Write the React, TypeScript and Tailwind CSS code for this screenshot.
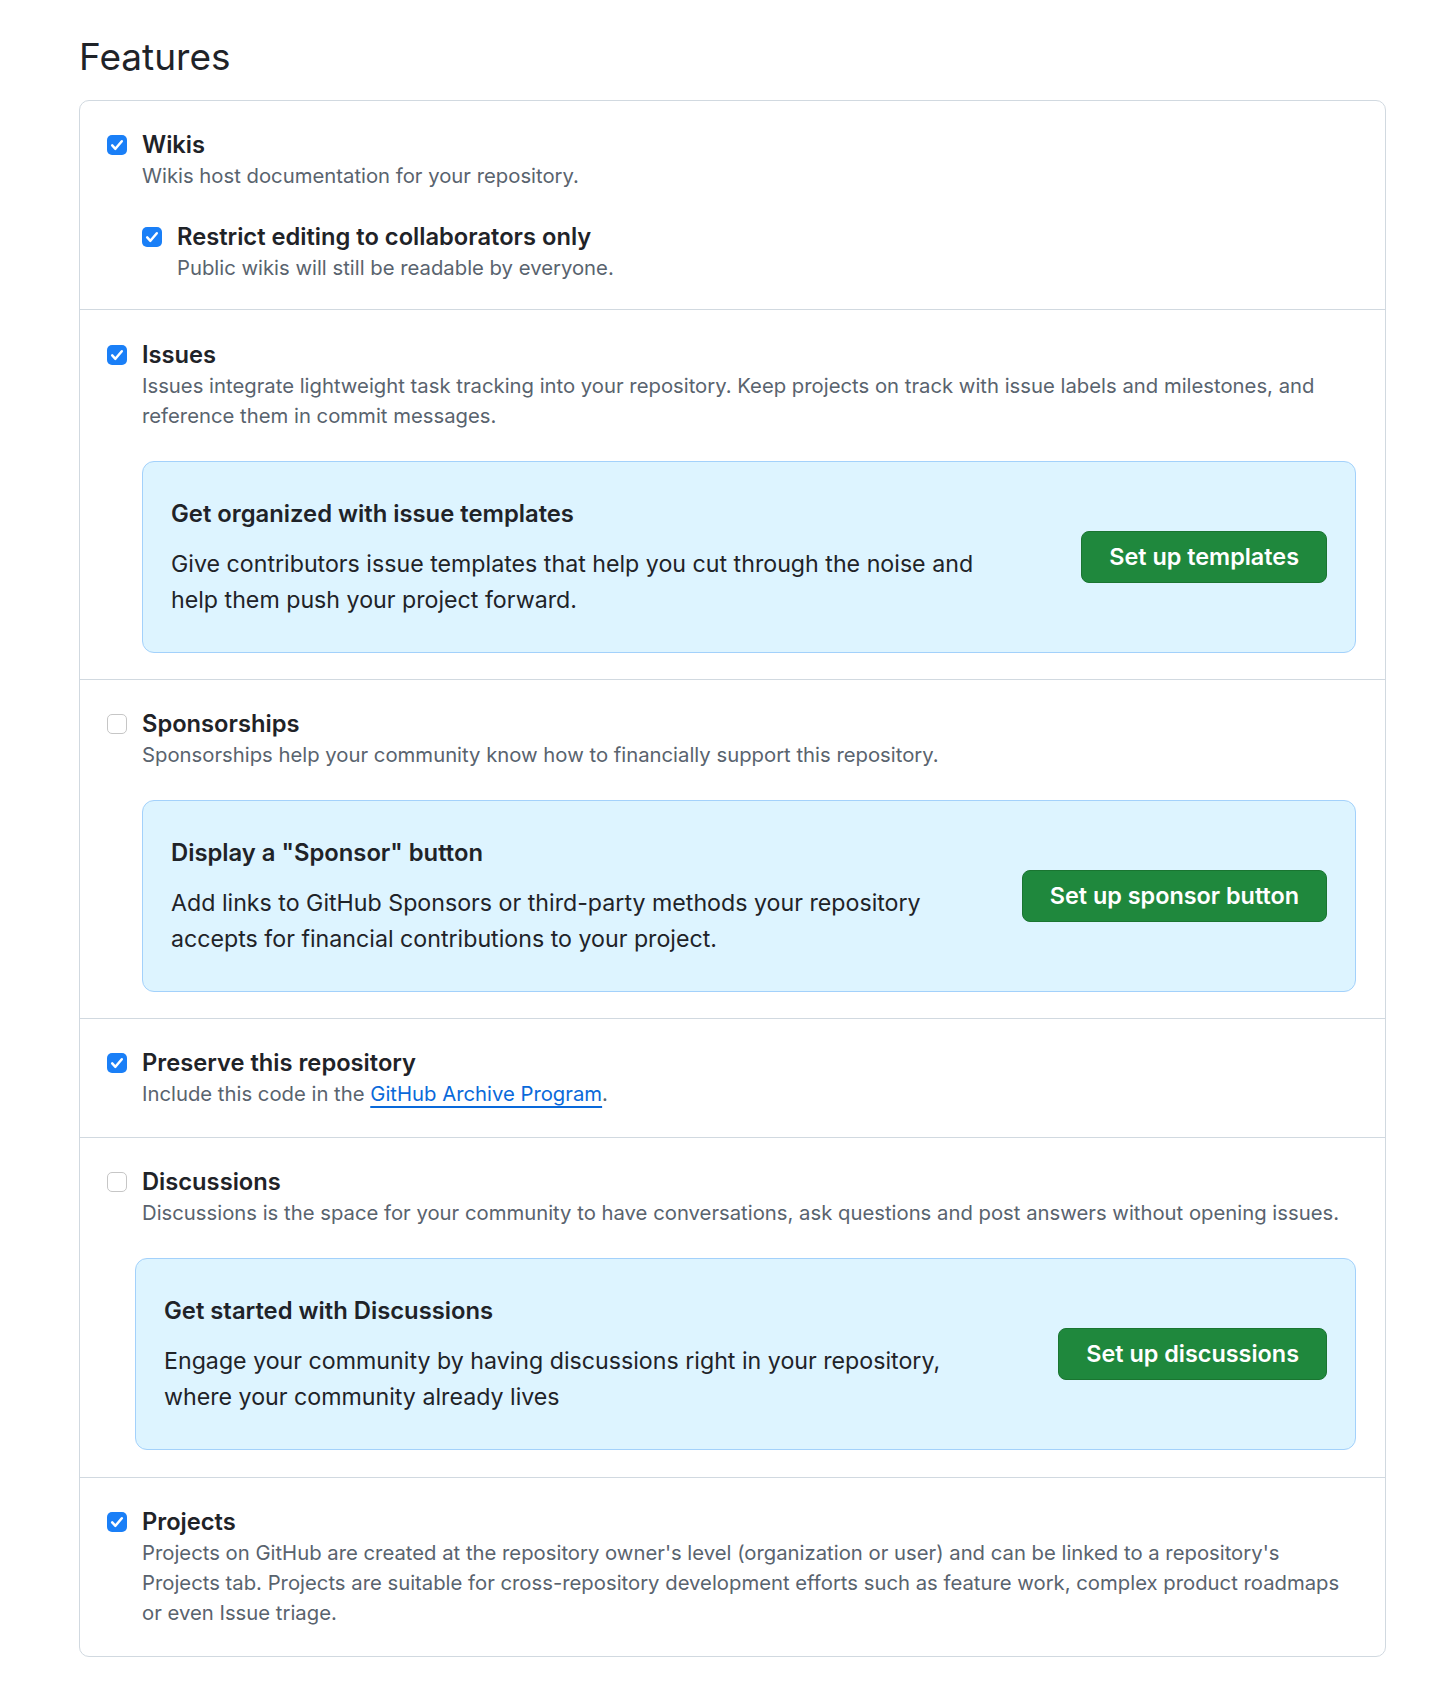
import React from 'react';

function Checkbox({ checked }: { checked: boolean }) {
  if (!checked) {
    return <span className="mt-[6px] h-[20px] w-[20px] shrink-0 rounded-[5px] border border-[#c6c6c6] bg-white" />;
  }
  return (
    <span className="mt-[6px] flex h-[20px] w-[20px] shrink-0 items-center justify-center rounded-[5px] bg-[#1a7ff7]">
      <svg viewBox="0 0 20 20" className="h-[20px] w-[20px]" fill="none">
        <path d="M5.2 10.4l3.2 3.4 6.4-7.6" stroke="white" strokeWidth="2.5" strokeLinecap="round" strokeLinejoin="round" />
      </svg>
    </span>
  );
}

function Feature({
  checked,
  title,
  children,
  extra,
}: {
  checked: boolean;
  title: string;
  children: React.ReactNode;
  extra?: React.ReactNode;
}) {
  return (
    <div className="flex gap-[15px]">
      <Checkbox checked={checked} />
      <div className="min-w-0 flex-1">
        <div className="text-[23.7px] font-semibold leading-[32px] text-[#1f2328]">{title}</div>
        <p className="text-[20.3px] leading-[30px] text-[#59636e]">{children}</p>
        {extra}
      </div>
    </div>
  );
}

function Banner({
  title,
  body,
  button,
  className = '',
}: {
  title: string;
  body: string;
  button: string;
  className?: string;
}) {
  return (
    <div
      className={
        'mt-[30px] flex items-center justify-between gap-6 rounded-[12px] border border-[#a3d1fb] bg-[#ddf4ff] px-[28px] py-[34px] ' +
        className
      }
    >
      <div className="max-w-[820px]">
        <div className="text-[23.8px] font-semibold leading-[36px] text-[#1f2328]">{title}</div>
        <p className="mt-[14px] text-[23.2px] leading-[36px] text-[#1f2328]">{body}</p>
      </div>
      <button className="h-[52px] shrink-0 rounded-[8px] border border-[#1a7531] bg-[#1f883d] px-[27px] text-[23.4px] font-semibold text-white">
        {button}
      </button>
    </div>
  );
}

export default function App() {
  return (
    <div className="min-h-screen bg-white px-[79px] pt-[33px] pb-[40px] font-['Inter',sans-serif]">
      <h2 className="mb-[19px] text-[37px] font-normal leading-[48px] text-[#1f2328]">Features</h2>

      <div className="w-[1307px] rounded-[10px] border border-[#d1d9e0] bg-white">
        <section className="pl-[27px] pr-[29px] pt-[28px] pb-[26px]">
          <Feature checked title="Wikis">
            Wikis host documentation for your repository.
          </Feature>
          <div className="mt-[30px] pl-[35px]">
            <Feature checked title="Restrict editing to collaborators only">
              Public wikis will still be readable by everyone.
            </Feature>
          </div>
        </section>

        <section className="border-t border-[#d1d9e0] pl-[27px] pr-[29px] pt-[29px] pb-[26px]">
          <Feature
            checked
            title="Issues"
            extra={
              <Banner
                title="Get organized with issue templates"
                body="Give contributors issue templates that help you cut through the noise and help them push your project forward."
                button="Set up templates"
              />
            }
          >
            Issues integrate lightweight task tracking into your repository. Keep projects on track with issue labels and
            milestones, and reference them in commit messages.
          </Feature>
        </section>

        <section className="border-t border-[#d1d9e0] pl-[27px] pr-[29px] pt-[28px] pb-[26px]">
          <Feature
            checked={false}
            title="Sponsorships"
            extra={
              <Banner
                title={'Display a "Sponsor" button'}
                body="Add links to GitHub Sponsors or third-party methods your repository accepts for financial contributions to your project."
                button="Set up sponsor button"
              />
            }
          >
            Sponsorships help your community know how to financially support this repository.
          </Feature>
        </section>

        <section className="border-t border-[#d1d9e0] pl-[27px] pr-[29px] pt-[28px] pb-[28px]">
          <Feature checked title="Preserve this repository">
            Include this code in the{' '}
            <a href="#" className="text-[#0969da] underline decoration-[1.5px] underline-offset-[5px]">
              GitHub Archive Program
            </a>
            .
          </Feature>
        </section>

        <section className="border-t border-[#d1d9e0] pl-[27px] pr-[29px] pt-[28px] pb-[27px]">
          <Feature
            checked={false}
            title="Discussions"
            extra={
              <Banner
                className="-ml-[7px]"
                title="Get started with Discussions"
                body="Engage your community by having discussions right in your repository, where your community already lives"
                button="Set up discussions"
              />
            }
          >
            Discussions is the space for your community to have conversations, ask questions and post answers without
            opening issues.
          </Feature>
        </section>

        <section className="border-t border-[#d1d9e0] pl-[27px] pr-[29px] pt-[28px] pb-[28px]">
          <Feature checked title="Projects">
            Projects on GitHub are created at the repository owner's level (organization or user) and can be linked to a
            repository's Projects tab. Projects are suitable for cross-repository development efforts such as feature
            work, complex product roadmaps or even Issue triage.
          </Feature>
        </section>
      </div>
    </div>
  );
}
